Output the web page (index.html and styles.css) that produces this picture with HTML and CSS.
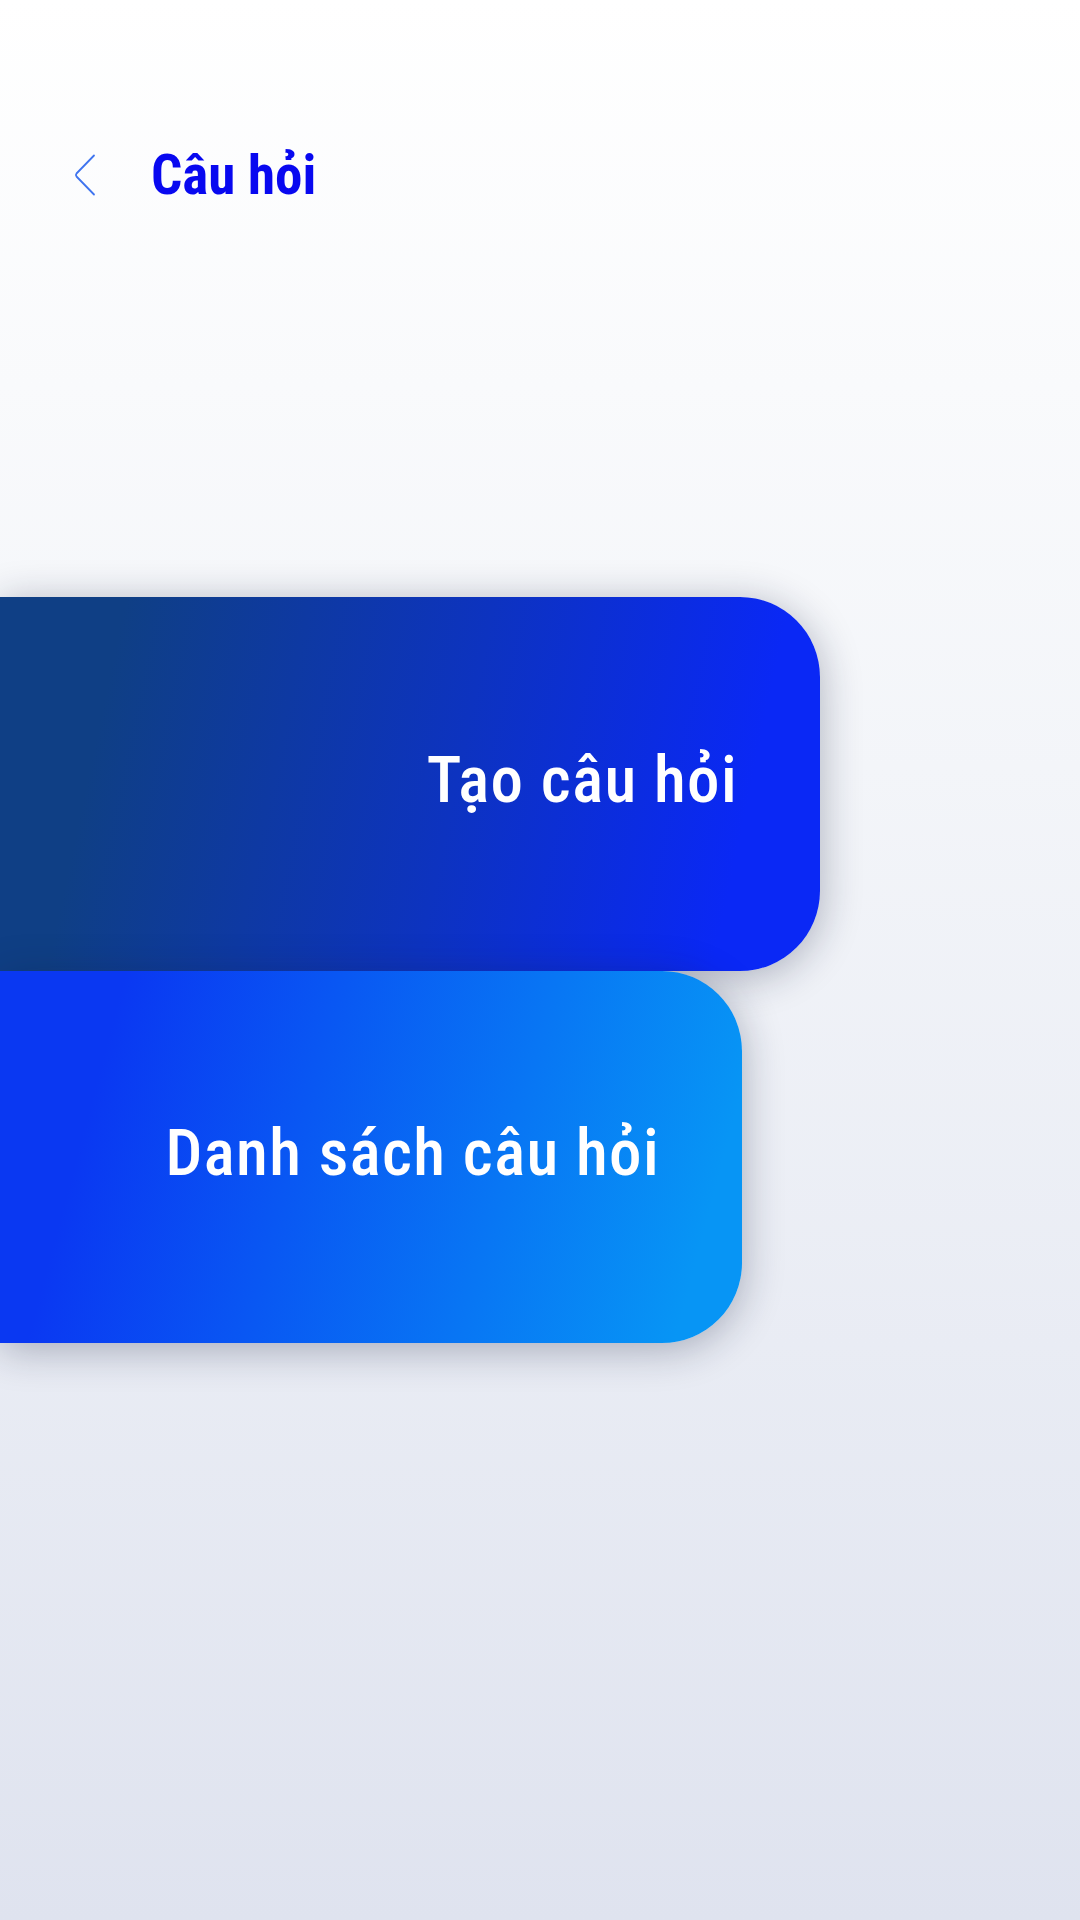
FILE: index.html
```html
<!DOCTYPE html>
<html lang="vi">
<head>
<meta charset="utf-8">
<title>Câu hỏi</title>
<link rel="stylesheet" href="styles.css">
</head>
<body>
<div class="page">
  <header class="header">
    <button class="back" aria-label="Quay lại">
      <svg width="22" height="42" viewBox="0 0 22 42"><path d="M20 1.5 L2.5 19.5 Q1.3 21 2.5 22.5 L20 40.5" fill="none" stroke="#3f74ef" stroke-width="1.8" stroke-linecap="round" stroke-linejoin="round"/></svg>
    </button>
    <h1 class="title">Câu hỏi</h1>
  </header>
  <main class="menu">
    <a class="card card-create">Tạo câu hỏi</a>
    <a class="card card-list">Danh sách câu hỏi</a>
  </main>
</div>
</body>
</html>
```
FILE: styles.css
```css
html, body {
  margin: 0;
  padding: 0;
}
body {
  width: 1080px;
  height: 1920px;
  background: linear-gradient(to bottom, #ffffff 0%, #f3f5f9 40%, #dfe3ef 100%);
  font-family: "Roboto Condensed", Roboto, sans-serif;
  font-stretch: condensed;
  overflow: hidden;
}
.page {
  display: flex;
  flex-direction: column;
}
.header {
  display: flex;
  align-items: center;
  height: 60px;
  margin-top: 145px;
  padding-left: 74px;
}
.back {
  display: flex;
  align-items: center;
  justify-content: center;
  border: 0;
  background: none;
  padding: 0;
  width: 22px;
  height: 42px;
}
.title {
  margin: 0 0 0 55px;
  font-size: 55px;
  font-weight: 700;
  color: #0808f0;
  line-height: 60px;
}
.menu {
  display: flex;
  flex-direction: column;
  margin-top: 392px;
}
.card {
  display: flex;
  align-items: center;
  justify-content: flex-end;
  box-sizing: border-box;
  padding-right: 82px;
  padding-bottom: 8px;
  border-radius: 0 80px 80px 0;
  color: #ffffff;
  font-size: 65px;
  font-weight: 500;
  letter-spacing: 1.4px;
  box-shadow: 0 6px 42px rgba(20, 28, 60, 0.32);
}
.card-create {
  width: 820px;
  height: 374px;
  background: linear-gradient(102deg, #0f3f85 14%, #0d33c0 55%, #0a28f5 88%);
}
.card-list {
  width: 742px;
  height: 372px;
  background: linear-gradient(105deg, #0a38f2 15%, #0795f5 92%);
}
```
